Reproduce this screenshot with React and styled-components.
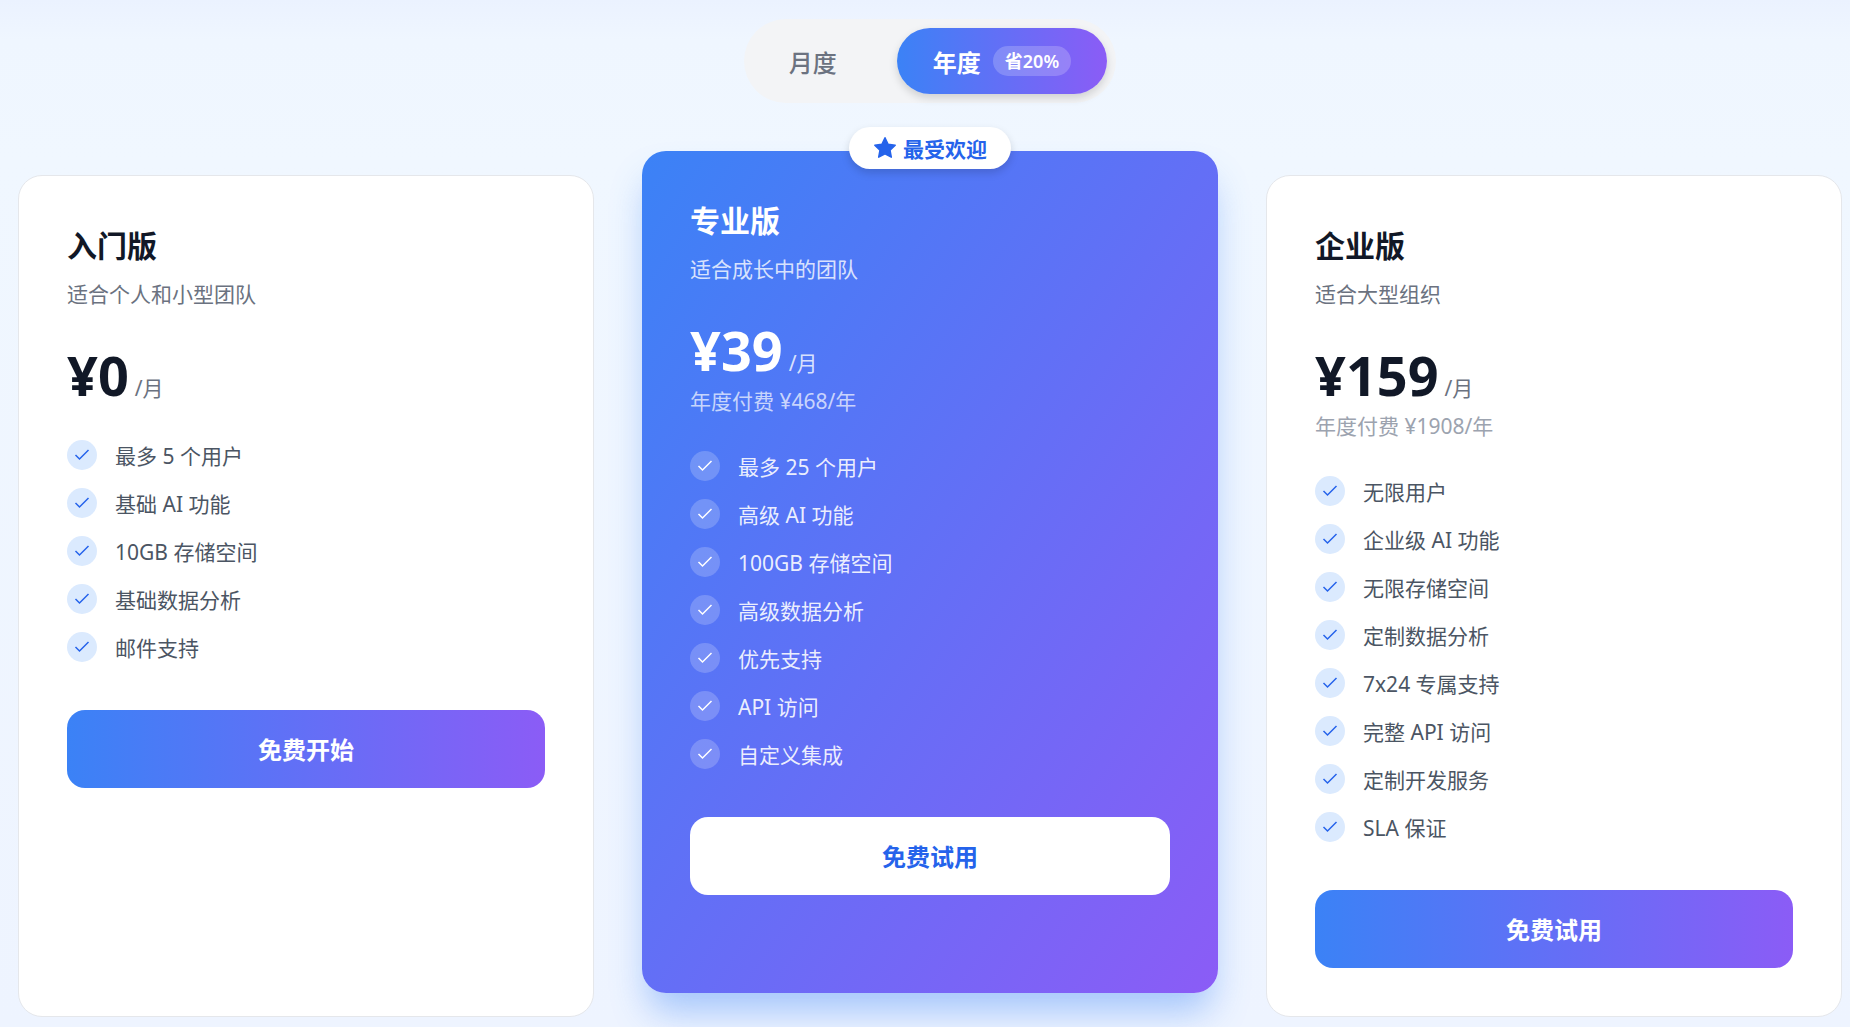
import React from "react"
import styled, { createGlobalStyle, css } from "styled-components"

const GlobalStyle = createGlobalStyle`
  * {
    box-sizing: border-box;
  }
  body {
    margin: 0;
    background: #eff6ff;
    font-family: "Noto Sans", "Noto Sans CJK SC", sans-serif;
    color: #111827;
  }
  h2, p, ul {
    margin: 0;
    padding: 0;
  }
  button {
    border: none;
    font-family: inherit;
    cursor: pointer;
  }
`

const brand = "#3b82f6 0%, #8b5cf6 100%"

const Page = styled.main`
  padding: 19px 8px 10px 18px;
  min-height: 100vh;
  overflow: hidden;
  background: linear-gradient(180deg, #ebf2ff 0, #eff6ff 40px, #f0f7ff 160px, #eef4ff 100%);
`

const Toggle = styled.div`
  display: flex;
  gap: 24px;
  width: fit-content;
  margin: 0 auto 72px;
  padding: 9px;
  border-radius: 42px;
  background: #f3f4f6;
`

const ToggleButton = styled.button`
  display: flex;
  align-items: center;
  gap: 12px;
  height: 66px;
  padding: 0 36px;
  border-radius: 33px;
  font-size: 24px;
  font-weight: 500;
  color: #6b7280;
  background: transparent;
  ${props =>
    props.$active &&
    css`
      color: #fff;
      font-weight: 600;
      background: linear-gradient(90deg, ${brand});
      box-shadow: 0 4px 9px rgba(0, 0, 0, 0.15);
    `}
`

const Saving = styled.span`
  padding: 0 12px;
  border-radius: 15px;
  background: rgba(255, 255, 255, 0.2);
  font-size: 18px;
  line-height: 30px;
`

const Plans = styled.section`
  display: grid;
  grid-template-columns: repeat(3, 1fr);
  gap: 48px;
`

const Card = styled.article`
  position: relative;
  padding: 48px;
  border: 1px solid #e5e7eb;
  border-radius: 24px;
  background: #fff;
  ${props =>
    props.$featured &&
    css`
      margin: -24px 0 24px;
      border: none;
      color: #fff;
      background: linear-gradient(to bottom right, ${brand});
      box-shadow: 0 24px 36px -6px rgba(59, 130, 246, 0.42);
    `}
`

const Popular = styled.div`
  position: absolute;
  top: -24px;
  left: 50%;
  transform: translateX(-50%);
  display: flex;
  align-items: center;
  gap: 6px;
  height: 42px;
  padding: 0 24px;
  border-radius: 21px;
  background: #fff;
  color: #2563eb;
  font-size: 21px;
  font-weight: 600;
  white-space: nowrap;
  box-shadow: 0 4px 9px rgba(0, 0, 0, 0.15);
`

const Name = styled.h2`
  margin-bottom: 10px;
  font-size: 30px;
  font-weight: 700;
  line-height: 44px;
`

const Description = styled.p`
  margin-bottom: 32px;
  font-size: 21px;
  line-height: 32px;
  color: ${props => (props.$featured ? "rgba(255, 255, 255, 0.8)" : "#6b7280")};
`

const Price = styled.div`
  display: flex;
  align-items: baseline;
  gap: 6px;
  font-size: 54px;
  font-weight: 700;
  line-height: 66px;
`

const Period = styled.span`
  font-size: 21px;
  font-weight: 400;
  line-height: 32px;
  color: ${props => (props.$featured ? "rgba(255, 255, 255, 0.8)" : "#6b7280")};
`

const Yearly = styled.p`
  padding: 2px 0;
  font-size: 21px;
  line-height: 32px;
  color: ${props => (props.$featured ? "rgba(255, 255, 255, 0.7)" : "#9ca3af")};
`

const Features = styled.ul`
  display: flex;
  flex-direction: column;
  gap: 18px;
  margin: 32px 0 48px;
  list-style: none;
`

const Feature = styled.li`
  display: flex;
  gap: 18px;
  height: 30px;
  font-size: 21px;
  line-height: 32px;
  color: ${props => (props.$featured ? "rgba(255, 255, 255, 0.9)" : "#4b5563")};
`

const Tick = styled.span`
  display: flex;
  align-items: center;
  justify-content: center;
  width: 30px;
  height: 30px;
  border-radius: 50%;
  color: ${props => (props.$featured ? "#fff" : "#2563eb")};
  background: ${props => (props.$featured ? "rgba(255, 255, 255, 0.2)" : "#dbeafe")};
`

const Action = styled.button`
  display: block;
  width: 100%;
  height: 78px;
  padding: 0 0 2px;
  border-radius: 18px;
  font-size: 24px;
  font-weight: 600;
  color: ${props => (props.$featured ? "#2563eb" : "#fff")};
  background: ${props => (props.$featured ? "#fff" : `linear-gradient(90deg, ${brand})`)};
`

const CheckIcon = () => (
  <svg width="18" height="18" viewBox="0 0 18 18" fill="none" aria-hidden="true">
    <path d="M2.5 9 6.5 13 15.5 4" stroke="currentColor" strokeWidth="1.5" />
  </svg>
)

const StarIcon = () => (
  <svg width="24" height="24" viewBox="0 0 24 24" fill="currentColor" stroke="currentColor" strokeWidth="1.5" strokeLinejoin="round" aria-hidden="true">
    <path d="M12 1.800l3.100 6.500 7.100 1-5.200 4.900 1.300 7L12 17.800l-6.300 3.400L7 14.200 1.800 9.300l7.100-1z" />
  </svg>
)

const plans = [
  {
    name: "入门版",
    description: "适合个人和小型团队",
    price: "¥0",
    features: ["最多 5 个用户", "基础 AI 功能", "10GB 存储空间", "基础数据分析", "邮件支持"],
    action: "免费开始",
  },
  {
    name: "专业版",
    description: "适合成长中的团队",
    price: "¥39",
    yearly: "年度付费 ¥468/年",
    features: [
      "最多 25 个用户",
      "高级 AI 功能",
      "100GB 存储空间",
      "高级数据分析",
      "优先支持",
      "API 访问",
      "自定义集成",
    ],
    action: "免费试用",
    featured: true,
  },
  {
    name: "企业版",
    description: "适合大型组织",
    price: "¥159",
    yearly: "年度付费 ¥1908/年",
    features: [
      "无限用户",
      "企业级 AI 功能",
      "无限存储空间",
      "定制数据分析",
      "7x24 专属支持",
      "完整 API 访问",
      "定制开发服务",
      "SLA 保证",
    ],
    action: "免费试用",
  },
]

const Plan = ({ plan }) => {
  const { featured } = plan
  return (
    <Card $featured={featured}>
      {featured && (
        <Popular>
          <StarIcon />
          最受欢迎
        </Popular>
      )}
      <Name>{plan.name}</Name>
      <Description $featured={featured}>{plan.description}</Description>
      <Price>
        {plan.price}
        <Period $featured={featured}>/月</Period>
      </Price>
      {plan.yearly && <Yearly $featured={featured}>{plan.yearly}</Yearly>}
      <Features>
        {plan.features.map(feature => (
          <Feature key={feature} $featured={featured}>
            <Tick $featured={featured}>
              <CheckIcon />
            </Tick>
            {feature}
          </Feature>
        ))}
      </Features>
      <Action type="button" $featured={featured}>{plan.action}</Action>
    </Card>
  )
}

const App = () => (
  <>
    <GlobalStyle />
    <Page lang="zh-CN">
      <Toggle>
        <ToggleButton type="button">月度</ToggleButton>
        <ToggleButton type="button" $active>
          年度
          <Saving>省20%</Saving>
        </ToggleButton>
      </Toggle>
      <Plans>
        {plans.map(plan => (
          <Plan key={plan.name} plan={plan} />
        ))}
      </Plans>
    </Page>
  </>
)

export default App
